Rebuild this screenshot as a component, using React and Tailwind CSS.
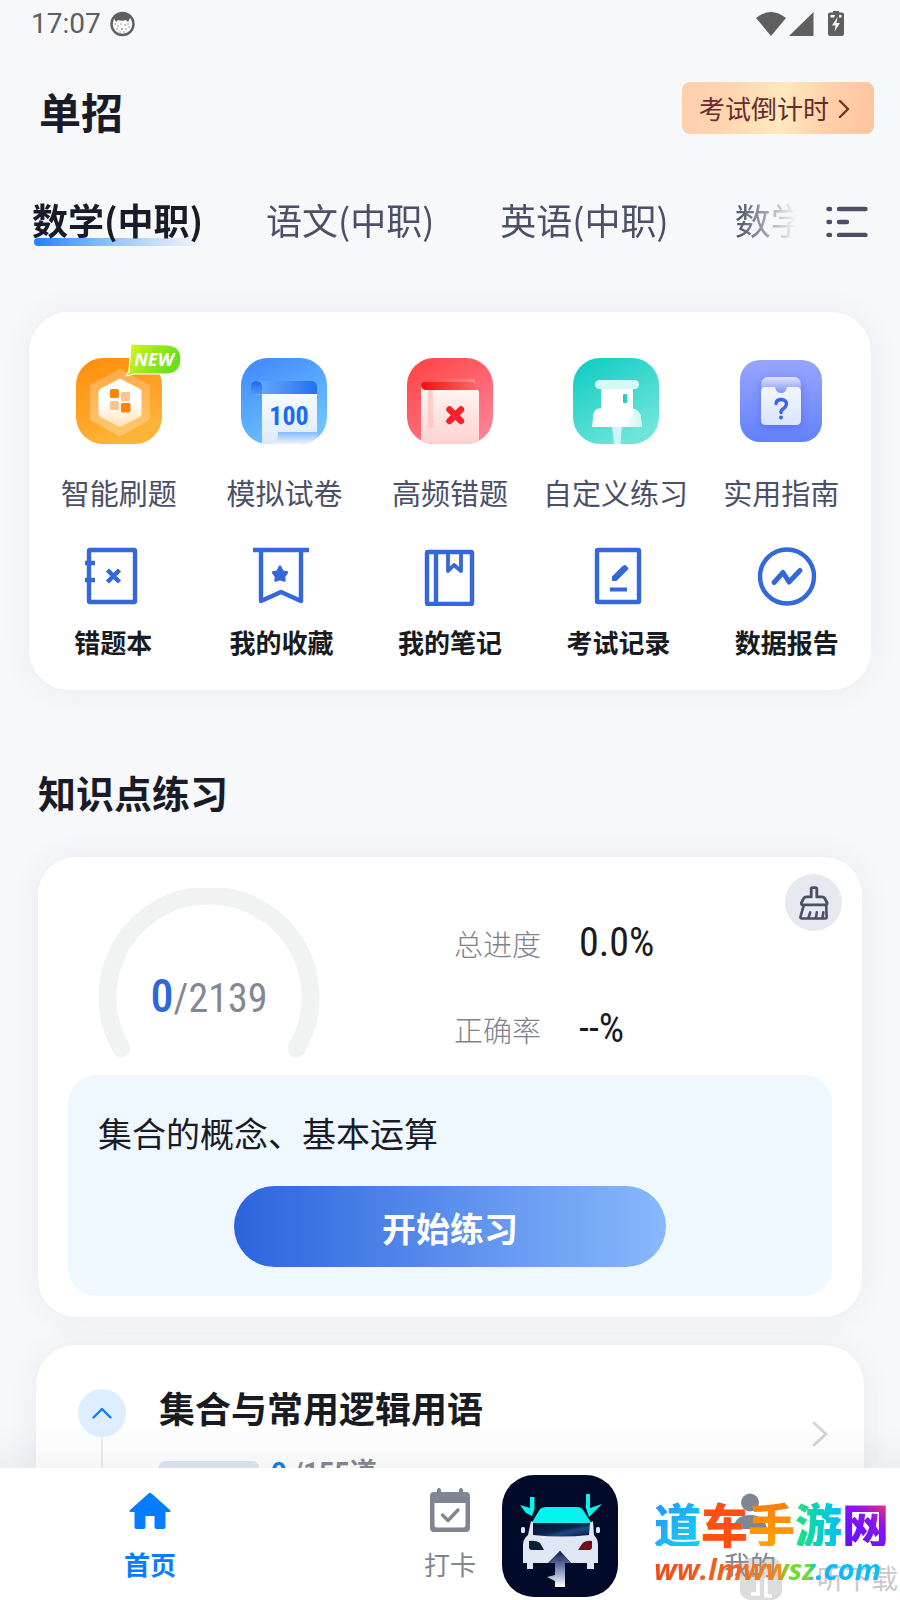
import React from "react";

const cjk = "font-['Noto_Sans_CJK_SC',sans-serif]";
const digits = "font-['Roboto_Condensed','Liberation_Sans_Narrow',Roboto,sans-serif]";

function StatusBar() {
  return (
    <div className="flex h-12 items-center justify-between pl-[31px] pr-[56px] text-[#5f5f5f]">
      <div className="flex items-center gap-2 font-[Roboto,sans-serif] text-[28px] leading-8">
        <span>17:07</span>
        <svg className="size-[26px]" viewBox="0 0 26 26" aria-hidden="true">
          <circle cx="13.500" cy="13" r="11" fill="#fafafa" stroke="#5f5f5f" strokeWidth="2.4" />
          <path d="M5 5 Q13 -1 22 5 L20.500 8 L19 11 L17 9 Q13 10.500 9 9 L7 11 L5.500 8 Z" fill="#5f5f5f" />
          <g fill="#8a8a8a">
            <circle cx="6" cy="13" r=".7" /><circle cx="9" cy="15" r=".7" /><circle cx="12" cy="13" r=".7" />
            <circle cx="16" cy="14" r=".8" /><circle cx="19" cy="13" r=".7" /><circle cx="8" cy="18" r=".7" />
            <circle cx="13" cy="18" r=".9" /><circle cx="17" cy="18" r=".7" /><circle cx="11" cy="21" r=".7" />
            <circle cx="15" cy="21" r=".7" /><circle cx="20" cy="16" r=".7" />
          </g>
        </svg>
      </div>
      <svg className="h-[26px] w-[88px]" viewBox="0 0 88 26" aria-hidden="true" fill="#5f5f5f">
        <path d="M0 7 Q15 -5 30 7 L15 25 Z" />
        <path d="M33 25 L57.500 1 V25 Z" />
        <path fillRule="evenodd" d="M77 0 h6 v1.500 h3 q2 0 2 2 V23 q0 2 -2 2 H74 q-2 0 -2 -2 V3.500 q0 -2 2 -2 h3 Z M81.500 6 L76 14.500 H79.500 L78.500 20.500 L84 12 H80.500 Z M74.500 4 V6.500 H78 L79 4 Z M83 4 V6.500 H85.500 V4 Z" />
      </svg>
    </div>
  );
}

function Header() {
  return (
    <header className="mt-[34px] flex h-[60px] items-start justify-between pl-[39px] pr-[26px]">
      <h1 className="text-[42px] font-bold leading-[58px] text-[#191b28]">单招</h1>
      <button type="button" className="flex h-[52px] items-center rounded-lg bg-[linear-gradient(100deg,#ffcfae_0%,#ffd6b0_25%,#ffe9bd_52%,#ffd0a8_76%,#ffc49f_100%)] pl-[17px] pr-[22px] text-[26px] leading-[52px] text-[#6b2a2c]">
        考试倒计时
        <svg className="ml-2 h-5 w-[15px]" viewBox="0 0 15 20" fill="none" stroke="#6b3526" strokeWidth="2.4" aria-hidden="true">
          <path d="M3 3 L11 11 L3 19" strokeLinecap="round" strokeLinejoin="round" />
        </svg>
      </button>
    </header>
  );
}

const subjects = ["数学(中职)", "语文(中职)", "英语(中职)", "数学"];

function Tabs() {
  return (
    <nav className="mt-[51px] flex h-14 items-center pl-8 pr-8" aria-label="科目">
      <div className="flex min-w-0 flex-1 gap-[66px] overflow-hidden [mask-image:linear-gradient(to_right,black_0,black_calc(100%_-_60px),transparent_100%)]">
        {subjects.map((s, i) => (
          <button
            key={i}
            type="button"
            className={
              i === 0
                ? "relative w-[168px] shrink-0 whitespace-nowrap pb-1 text-left text-[36px] font-bold leading-[46px] text-[#191b28]"
                : "shrink-0 whitespace-nowrap pb-1 text-[36px] leading-[46px] text-[#4b5068]"
            }
          >
            {i === 0 && <span className="absolute bottom-0 left-[2px] h-2 w-full rounded-full bg-gradient-to-r from-[#1a80fb] via-[#9cc7fb] to-transparent" />}
            <span className="relative">{s}</span>
          </button>
        ))}
      </div>
      <button type="button" aria-label="全部科目" className="ml-[30px] shrink-0">
        <svg className="h-8 w-[42px]" viewBox="0 0 42 32" stroke="#4b5068" strokeWidth="4.400" strokeLinecap="round" aria-hidden="true">
          <path d="M2.500 4 H4 M2.500 17 H4 M2.500 30 H4 M13 4 H39.500 M13 17 H21 M13 30 H39.500" />
        </svg>
      </button>
    </nav>
  );
}

function SmartIcon() {
  return (
    <span className="relative block">
      <svg className="size-[86px]" viewBox="0 0 86 86" aria-hidden="true">
        <defs>
          <linearGradient id="or" x1="0" y1="0" x2=".4" y2="1"><stop stopColor="#ff8c0a" /><stop offset="1" stopColor="#fdb338" /></linearGradient>
          <linearGradient id="orh" x1="0" y1="0" x2="0" y2="1"><stop stopColor="#fff" /><stop offset=".5" stopColor="#fff" /><stop offset="1" stopColor="#ffe3b8" /></linearGradient>
          <linearGradient id="oro" x1="0" y1="0" x2="0" y2="1"><stop stopColor="#ffb35c" /><stop offset="1" stopColor="#ffd080" /></linearGradient>
        </defs>
        <rect width="86" height="86" rx="27" fill="url(#or)" />
        <path d="M44 11 L72 26 Q74 27 74 29 V60 Q74 62 72 63 L47 77 Q44 79 41 77 L16 63 Q14 62 14 60 V29 Q14 27 16 26 Z" fill="url(#oro)" opacity=".75" />
        <path d="M44 20.500 L64 31 Q65.500 32 65.500 34 V56 Q65.500 58 64 59 L46 68 Q44 69 42 68 L24 59 Q22.500 58 22.500 56 V34 Q22.500 32 24 31 Z" fill="url(#orh)" />
        <rect x="34" y="31" width="9" height="9" rx="1.500" fill="#fb8508" />
        <rect x="45" y="34" width="9" height="9" rx="1.500" fill="#fcc58c" />
        <rect x="34" y="43" width="9" height="9" rx="1.500" fill="#fcc58c" />
        <rect x="45" y="45" width="9.500" height="9.500" rx="1.500" fill="#fb8508" />
      </svg>
      <svg className="absolute -top-[15px] left-[49px] h-[34px] w-[58px]" viewBox="0 0 58 34" aria-hidden="true">
        <defs><linearGradient id="nw" x1="0" y1="0" x2="1" y2=".3"><stop stopColor="#e2f51e" /><stop offset=".6" stopColor="#8fe81c" /><stop offset="1" stopColor="#66e01b" /></linearGradient></defs>
        <path d="M6 1 L42 2 Q56 3 56 16 Q56 30 42 31 H9 L1 33 L4 28 Z" fill="url(#nw)" stroke="#fff" strokeWidth="1.200" />
        <text x="29" y="23" textAnchor="middle" className="font-['Open_Sans',sans-serif] text-[18px] font-bold italic" fill="#fff">NEW</text>
      </svg>
    </span>
  );
}

function PaperIcon() {
  return (
    <svg className="size-[86px]" viewBox="0 0 86 86" aria-hidden="true">
      <defs>
        <linearGradient id="bl" x1="0" y1="0" x2=".5" y2="1"><stop stopColor="#3f86fc" /><stop offset="1" stopColor="#6cc4fe" /></linearGradient>
        <linearGradient id="blr" x1="0" y1="0" x2="1" y2="0"><stop stopColor="#6aabfb" /><stop offset="1" stopColor="#2270f2" /></linearGradient>
        <linearGradient id="blp" x1="0" y1="0" x2="0" y2="1"><stop stopColor="#f6faff" /><stop offset="1" stopColor="#dcebff" /></linearGradient>
        <linearGradient id="blc" x1="0" y1="0" x2="0" y2="1"><stop stopColor="#86b9fd" /><stop offset="1" stopColor="#eef6ff" /></linearGradient>
        <linearGradient id="bll" x1="0" y1="0" x2="0" y2="1"><stop stopColor="#1c68ea" /><stop offset="1" stopColor="#4c97fb" /></linearGradient>
        <clipPath id="blk"><rect width="86" height="86" rx="27" /></clipPath>
      </defs>
      <g clipPath="url(#blk)">
        <rect width="86" height="86" fill="url(#bl)" />
        <path d="M15 23 H70 Q76 23 76 29 V37 H15 Z" fill="url(#blr)" />
        <path d="M10 36 V29 Q10 23 15 23 Q21 23 21 29 V36 Z" fill="url(#bll)" />
        <path d="M21 36 H76 V76 H60 V86 H21 Z" fill="url(#blp)" />
        <path d="M37 74 H78 Q75 86 64 86 H33 Q37 82 37 74 Z" fill="url(#blc)" />
      </g>
      <text x="48" y="67" textAnchor="middle" className="font-['Roboto_Condensed','Liberation_Sans_Narrow',Roboto,sans-serif] text-[26px] font-bold" fill="#1a6cf0">100</text>
    </svg>
  );
}

function WrongIcon() {
  return (
    <svg className="size-[86px]" viewBox="0 0 86 86" aria-hidden="true">
      <defs>
        <linearGradient id="rd" x1="0" y1="0" x2=".7" y2="1"><stop stopColor="#ff4141" /><stop offset="1" stopColor="#ff7f94" /></linearGradient>
        <linearGradient id="rdr" x1="0" y1="0" x2="1" y2="0"><stop stopColor="#ee1010" /><stop offset="1" stopColor="#ff6464" /></linearGradient>
        <linearGradient id="rdp" x1="0" y1="0" x2="0" y2="1"><stop stopColor="#fff6f3" /><stop offset="1" stopColor="#ffd2d0" /></linearGradient>
        <linearGradient id="rdt" x1="0" y1="0" x2="1" y2="0"><stop stopColor="#ff4a48" /><stop offset="1" stopColor="#ff8d88" /></linearGradient>
        <clipPath id="rdk"><rect width="86" height="86" rx="27" /></clipPath>
      </defs>
      <g clipPath="url(#rdk)">
        <rect width="86" height="86" fill="url(#rd)" />
        <rect x="18" y="21" width="50" height="8" rx="2" fill="url(#rdt)" />
        <rect x="14" y="24" width="54" height="9" rx="4" fill="url(#rdr)" />
        <path d="M14 28 Q15 32 19 32 H70 Q72 32 72 34 V86 H14 Z" fill="url(#rdp)" />
        <path d="M21 32 H26 V70 H21 Z" fill="#ffb1ad" opacity=".5" />
      </g>
      <path d="M42.500 51.500 L54 63 M54 51.500 L42.500 63" stroke="#f3222c" strokeWidth="6.500" strokeLinecap="round" />
    </svg>
  );
}

function PinIcon() {
  return (
    <svg className="size-[86px]" viewBox="0 0 86 86" aria-hidden="true">
      <defs>
        <linearGradient id="gr" x1="0" y1="0" x2=".6" y2="1"><stop stopColor="#0acbc2" /><stop offset="1" stopColor="#6fe5da" /></linearGradient>
        <linearGradient id="grp" x1="0" y1="0" x2="1" y2="0"><stop stopColor="#fff" /><stop offset="1" stopColor="#c9f8f2" /></linearGradient>
        <clipPath id="grk"><rect width="86" height="86" rx="27" /></clipPath>
      </defs>
      <g clipPath="url(#grk)">
        <rect width="86" height="86" fill="url(#gr)" />
        <path d="M39 68 H49 L47.500 86 H41 Z" fill="#c9f8f3" />
        <rect x="28" y="29" width="32" height="24" fill="#fff" />
        <rect x="22" y="22" width="44" height="9" rx="4.500" fill="#d4faf5" />
        <path d="M24 51 Q29 49 36 49 H53 Q68 51 68 60 L69 69 H19 L20 60 Q20 53 24 51 Z" fill="#fff" />
        <path d="M62 51 Q68 54 68 60 L69 69 H49 Q57 62 62 51 Z" fill="url(#grp)" />
        <rect x="50" y="36" width="4" height="9" rx="1" fill="#24cfc5" />
      </g>
    </svg>
  );
}

function GuideIcon() {
  return (
    <svg className="size-[86px]" viewBox="0 0 86 86" aria-hidden="true">
      <defs>
        <linearGradient id="pu" x1="0" y1="0" x2="0" y2="1"><stop stopColor="#97a5fe" /><stop offset="1" stopColor="#6481fc" /></linearGradient>
        <linearGradient id="pup" x1="0" y1="0" x2="0" y2="1"><stop stopColor="#f3f6ff" /><stop offset="1" stopColor="#dbe3ff" /></linearGradient>
        <linearGradient id="put" x1="0" y1="0" x2="0" y2="1"><stop stopColor="#e1e6ff" /><stop offset=".5" stopColor="#8498fb" /></linearGradient>
        <filter id="pus" x="-30%" y="-30%" width="160%" height="160%"><feDropShadow dx="0" dy="3" stdDeviation="4" floodColor="#4059d8" floodOpacity=".5" /></filter>
      </defs>
      <rect x="2" y="2" width="82" height="82" rx="20" fill="url(#pu)" />
      <g filter="url(#pus)">
        <rect x="23" y="19" width="40" height="30" rx="7" fill="url(#put)" />
        <path d="M28 29 H37 Q38 35 43 35 Q48 35 49 29 H58 Q63 29 63 34 V62 Q63 67 58 67 H28 Q23 67 23 62 V34 Q23 29 28 29 Z" fill="url(#pup)" />
      </g>
      <path d="M38 45.500 Q38.500 41.500 43.500 41.500 Q48.500 42 48.500 46 Q48 49 45 51 Q43 52 43 54.500" fill="none" stroke="#3a63ee" strokeWidth="3.400" strokeLinecap="round" />
      <circle cx="43" cy="59.500" r="2" fill="#3a63ee" />
    </svg>
  );
}

const features = [
  { label: "智能刷题", Icon: SmartIcon },
  { label: "模拟试卷", Icon: PaperIcon },
  { label: "高频错题", Icon: WrongIcon },
  { label: "自定义练习", Icon: PinIcon },
  { label: "实用指南", Icon: GuideIcon },
];

const tools = [
  {
    label: "错题本",
    art: (
      <>
        <rect x="6" y="4" width="46" height="52" rx="1" />
        <path d="M2 17 H12 M2 34 H12" strokeLinecap="butt" />
        <path d="M24.500 24 L36.500 36 M36.500 24 L24.500 36" strokeWidth="4.500" strokeLinecap="butt" />
      </>
    ),
  },
  {
    label: "我的收藏",
    art: (
      <>
        <path d="M1 4 H57 M9 4 V55 L29 46 L49 55 V4" strokeLinecap="butt" />
        <path d="M28 20.500 L30.500 25.500 L35 26.500 L32 30.500 L32.500 34.500 L28 33 L23.500 34.500 L24 30.500 L21 26.500 L25.500 25.500 Z" fill="#3467d9" strokeWidth="2.400" />
      </>
    ),
  },
  {
    label: "我的笔记",
    art: (
      <>
        <rect x="7" y="6" width="45" height="52" rx="1" />
        <path d="M16 6 V58" />
        <path d="M28 7 V25 L34 19 L41 25 V7" strokeWidth="3.800" />
      </>
    ),
  },
  {
    label: "考试记录",
    art: (
      <>
        <rect x="9" y="4" width="42" height="52" rx="1" />
        <path d="M37 20 L39.500 22.500 L28 34 H25 V31 L35 21 Z" fill="#3467d9" strokeWidth="2" />
        <path d="M22 43.500 H39" strokeWidth="4" strokeLinecap="butt" />
      </>
    ),
  },
  {
    label: "数据报告",
    art: (
      <>
        <circle cx="30" cy="30.500" r="27" />
        <path d="M17 36.500 L26 26.500 L32 36 L43 24.500" strokeWidth="5" strokeLinecap="round" />
      </>
    ),
  },
];

function FeatureCard() {
  return (
    <section className="mx-[29px] mt-[63px] rounded-[40px] bg-white pb-7 pt-[46px] shadow-[0_0_30px_rgba(50,60,80,0.07)]">
      <div className="grid grid-cols-5 px-[7px]">
        {features.map(({ label, Icon }) => (
          <button key={label} type="button" className="flex flex-col items-center gap-7 whitespace-nowrap text-[29px] leading-10 text-[#4b5068]">
            <Icon />
            {label}
          </button>
        ))}
      </div>
      <div className="mt-[34px] grid grid-cols-5">
        {tools.map((t) => (
          <button key={t.label} type="button" className="flex flex-col items-center gap-4 whitespace-nowrap text-[26px] font-bold leading-10 text-[#191b22]">
            <svg className="size-[60px]" viewBox="0 0 60 60" fill="none" stroke="#3467d9" strokeWidth="4.400" strokeLinejoin="round" aria-hidden="true">
              {t.art}
            </svg>
            {t.label}
          </button>
        ))}
      </div>
    </section>
  );
}

function PracticeCard() {
  return (
    <section className="relative mx-[38px] mt-[41px] rounded-[38px] bg-white pb-[21px] shadow-[0_0_30px_rgba(50,60,80,0.07)]">
      <div className="grid h-[218px] grid-cols-2">
        <div className="grid pl-[60px] pt-[31px]">
          <svg className="h-[170px] w-[222px] [grid-area:1/1]" viewBox="0 0 222 170" fill="none" aria-hidden="true">
            <path d="M23.500 160.500 A101.500 101.500 0 1 1 198.500 160.500" stroke="#f1f3f3" strokeWidth="18" strokeLinecap="round" />
          </svg>
          <p className={`flex w-[222px] items-baseline justify-center pt-[78px] text-[40px] leading-[60px] text-[#838893] [grid-area:1/1] ${digits}`}>
            <span className="text-[46px] font-medium text-[#2f66dc]">0</span>/2139
          </p>
        </div>
        <dl className="pl-1 pt-[43px]">
          <div className="flex h-[86px] items-center">
            <dt className="w-[125px] text-[29px] font-light leading-[86px] text-[#7d828c]">总进度</dt>
            <dd className={`text-[40px] leading-[82px] text-[#191b22] ${digits}`}>0.0%</dd>
          </div>
          <div className="flex h-[86px] items-center">
            <dt className="w-[125px] text-[29px] font-light leading-[86px] text-[#7d828c]">正确率</dt>
            <dd className={`text-[40px] leading-[82px] text-[#191b22] ${digits}`}>--%</dd>
          </div>
        </dl>
      </div>
      <button type="button" aria-label="清除记录" className="absolute right-5 top-[17px] flex size-[57px] items-center justify-center rounded-full bg-[#e6eaf0]">
        <svg className="h-[34px] w-[30px]" viewBox="0 0 32 36" fill="none" stroke="#4b5068" strokeWidth="3" strokeLinejoin="round" strokeLinecap="round" aria-hidden="true">
          <path d="M13 11.500 V3 Q13 1.500 14.500 1.500 H17.500 Q19 1.500 19 3 V11.500 H24.500 Q26.500 11.500 27.500 13 L30 18 Q30 20 28.500 20 H4 Q2.500 20 2.500 18 L5 13 Q6 11.500 8 11.500 Z" />
          <path d="M5 20.500 L1.500 33 Q1.500 34.500 3 34.500 H28 Q29.500 34.500 29.500 33 L29 20.500 M10 34 L12 28 M18 34 L19 28 M25 34 L26 28" strokeWidth="2.800" />
        </svg>
      </button>
      <div className="mx-[30px] rounded-[28px] bg-[#eff7ff] px-[30px] pb-[29px] pt-[34px]">
        <h3 className="text-[34px] font-normal leading-[48px] text-[#191b28]">集合的概念、基本运算</h3>
        <button type="button" className="mx-auto mt-[29px] block h-[81px] w-[432px] max-w-full rounded-full bg-gradient-to-r from-[#2c63dc] to-[#8ab8fc] pt-[2px] text-[34px] font-bold text-white">
          开始练习
        </button>
      </div>
    </section>
  );
}

function ChapterCard() {
  return (
    <section className="mx-9 mt-7 flex rounded-[40px] bg-white pb-[30px] pl-[42px] pr-9 shadow-[0_0_30px_rgba(50,60,80,0.07)]">
      <div className="flex flex-col items-center pt-11">
        <button type="button" aria-label="收起" className="flex size-12 shrink-0 items-center justify-center rounded-full bg-[#deeeff]">
          <svg className="h-3 w-5" viewBox="0 0 20 12" fill="none" stroke="#0a7dff" strokeWidth="2.400" strokeLinecap="round" strokeLinejoin="round" aria-hidden="true">
            <path d="M1.500 10.500 L10 2 L18.500 10.500" />
          </svg>
        </button>
        <span className="w-[2px] flex-1 bg-[#ebebed]" />
      </div>
      <div className="ml-[33px] flex-1 pt-[38px]">
        <h3 className="text-[36px] font-bold leading-[48px] text-[#191b22]">集合与常用逻辑用语</h3>
        <div className="mt-[26px] flex items-start gap-3 text-[27px] font-bold leading-8 text-[#838893]">
          <span className="mt-1 block h-3 w-[100px] rounded-full bg-[#dde7f5]" />
          <span className="font-[Roboto,'Noto_Sans_CJK_SC',sans-serif]"><span className="text-[#0a7dff]">0</span> /155道</span>
        </div>
      </div>
      <svg className="mt-[76px] h-[26px] w-4 shrink-0" viewBox="0 0 16 26" fill="none" stroke="#d2d4d9" strokeWidth="3" strokeLinecap="round" strokeLinejoin="round" aria-hidden="true">
        <path d="M2 2 L14 13 L2 24" />
      </svg>
    </section>
  );
}

function BottomNav() {
  return (
    <nav className="relative grid h-[132px] shrink-0 grid-cols-3 bg-white text-[26px] leading-10 text-[#7f8692]">
      <a href="#home" className="flex flex-col items-center gap-[11px] pt-[19px] font-bold text-[#067dff]">
        <svg className="h-[46px] w-12" viewBox="0 0 48 46" fill="currentColor" aria-hidden="true">
          <path d="M22.500 6.500 Q24 5 25.500 6.500 L44 23 Q45.500 25 43 25 H39.500 V40 Q39.500 42 37.500 42 H30.500 Q28.500 42 28.500 40 V29 H19.500 V40 Q19.500 42 17.500 42 H10.500 Q8.500 42 8.500 40 V25 H5 Q2.500 25 4 23 Z" />
        </svg>
        首页
      </a>
      <a href="#checkin" className="flex flex-col items-center gap-[11px] pt-[19px]">
        <svg className="h-[46px] w-12" viewBox="0 0 48 46" aria-hidden="true">
          <path fillRule="evenodd" fill="currentColor" d="M11 2.500 Q13 -1 15 2.500 V5 H33 V2.500 Q35 -1 37 2.500 V5 H40 Q44 5 44 9 V41 Q44 45 40 45 H8 Q4 45 4 41 V9 Q4 5 8 5 H11 Z M8.500 16 V38 Q8.500 40.500 11 40.500 H37 Q39.500 40.500 39.500 38 V16 Z" />
          <path d="M16.500 28 L22 33.500 L32 23" fill="none" stroke="currentColor" strokeWidth="3.400" strokeLinecap="round" strokeLinejoin="round" />
        </svg>
        打卡
      </a>
      <a href="#mine" className="flex flex-col items-center gap-[11px] pt-[19px]">
        <svg className="h-[46px] w-12" viewBox="0 0 48 46" fill="currentColor" aria-hidden="true">
          <circle cx="24" cy="15.500" r="9" />
          <path d="M7 42 Q9 28 24 28 Q39 28 41 42 Z" />
        </svg>
        我的
      </a>
      <AppBadge />
      <SiteMark />
    </nav>
  );
}

function AppBadge() {
  return (
    <svg className="pointer-events-none absolute left-[502px] top-[7px] h-[122px] w-[116px]" viewBox="0 0 116 122" aria-hidden="true">
      <defs>
        <linearGradient id="glass" x1="0" y1="0" x2="1" y2="1"><stop stopColor="#061033" /><stop offset=".5" stopColor="#0b2350" /><stop offset=".65" stopColor="#1c4a80" /><stop offset="1" stopColor="#06103a" /></linearGradient>
        <linearGradient id="arr" x1="0" y1="0" x2="0" y2="1"><stop stopColor="#0c1a48" /><stop offset=".45" stopColor="#6f7fae" /><stop offset="1" stopColor="#fff" /></linearGradient>
      </defs>
      <rect width="116" height="122" rx="32" fill="#020a2a" />
      <path d="M38 34 Q40 32 44 32 H75 Q79 32 81 35 L90 49 H29 Z" fill="#06f4ee" />
      <path d="M29 46 L32 48 H88 L91 46 L92 60 Q96 64 96 70 V88 H92 V94 H85 V88 H69 L58 76 L46 88 H31 V94 H25 V88 H21 V70 Q21 64 26 60 Z" fill="#dfe7f5" />
      <path d="M31 48 H88 L87 60 Q60 63 31 60 Z" fill="url(#glass)" />
      <path d="M27 66 Q34 65 38 68 L42 75 H30 Q27 75 27 72 Z" fill="#0b1f35" />
      <path d="M90 66 Q83 65 80 69 L76 75 H87 Q90 75 90 72 Z" fill="#6d0f1c" />
      <rect x="19" y="52" width="4" height="6" rx="1.500" fill="#dfe7f5" />
      <rect x="94" y="52" width="4" height="6" rx="1.500" fill="#dfe7f5" />
      <path d="M58 76 L69 88 H63 V112 H53 V106 L45 102 L53 100 V88 H47 Z" fill="url(#arr)" />
      <path d="M28 22 H32.500 V34 L30 41 L24 38 L18 30 L28 33 Z M84 19 H88 V33 L100 29 L87 42 L82 27 L84 32 Z" fill="#06f4ee" />
    </svg>
  );
}

function SiteMark() {
  return (
    <div className="pointer-events-none absolute bottom-0 right-0 h-[100px] w-[246px]" aria-hidden="true">
      <div className="absolute left-[86px] top-[58px] flex h-[42px] w-[42px] items-end justify-center rounded-[10px] bg-[#9b9b9b]/35">
        <svg className="size-7" viewBox="0 0 28 28" fill="none" stroke="#fff" strokeWidth="3.500"><path d="M11 6 V22 H4 M19 6 V24 H25" /></svg>
      </div>
      <span className="absolute left-[163px] top-[58px] whitespace-nowrap text-[27px] leading-[40px] text-[#c9c9cb]">听下载</span>
      <div className="absolute left-0 top-0 flex text-[47px] font-black leading-[46px]">
        <span className="bg-gradient-to-br from-[#2f8fff] to-[#05d5ec] bg-clip-text text-transparent">道</span>
        <span className="text-[#ff5010]">车</span>
        <span className="bg-gradient-to-b from-[#ff7a08] to-[#ffa400] bg-clip-text text-transparent">手</span>
        <span className="bg-gradient-to-r from-[#25e27c] to-[#10bdf5] bg-clip-text text-transparent">游</span>
        <span className="bg-[linear-gradient(35deg,#6a10ff_20%,#8a14f2_60%,#f02a78_90%)] bg-clip-text text-transparent">网</span>
      </div>
      <span className="absolute left-0 top-[49px] whitespace-nowrap bg-[linear-gradient(90deg,#f24a16_0%,#f4641c_35%,#f08a20_54%,#6fdc30_58%,#6fdc30_67%,#12b4f5_70%,#08c4f2_100%)] bg-clip-text pr-1 font-['Open_Sans',sans-serif] text-[29px] font-bold italic leading-10 text-transparent">ww.lmwwsz.com</span>
    </div>
  );
}

export default function App() {
  return (
    <div className={`flex h-screen flex-col bg-[#f6f8fa] ${cjk}`}>
      <main className="relative min-h-0 flex-1 overflow-hidden">
        <StatusBar />
        <Header />
        <Tabs />
        <FeatureCard />
        <h2 className="mt-[78px] text-[38px] font-bold leading-[48px] pl-[38px] text-[#191b28]">知识点练习</h2>
        <PracticeCard />
        <ChapterCard />
        <div className="pointer-events-none absolute inset-x-0 bottom-0 h-11 bg-gradient-to-b from-transparent to-black/[0.035]" />
      </main>
      <BottomNav />
    </div>
  );
}
